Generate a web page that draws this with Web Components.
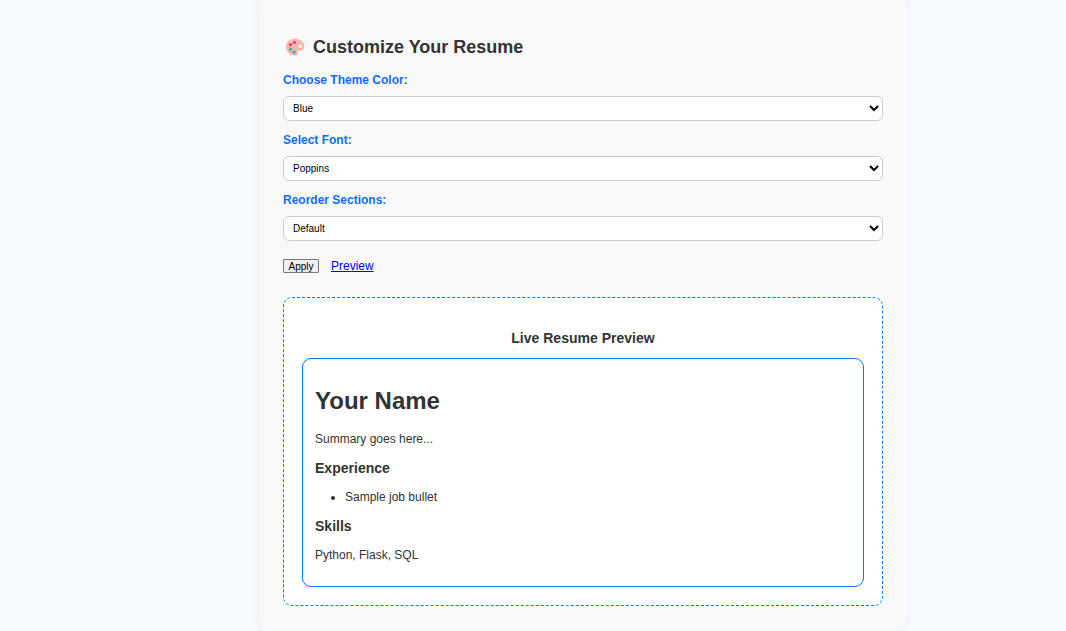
<!DOCTYPE html>
<html lang="en">
<head>
<meta charset="utf-8">
<title>Customize Your Resume</title>
<style>
html,body{margin:0;height:100%;overflow:hidden}
body{background:#f7fbff;color:#333;font:12px/14px "Liberation Sans",Arial,sans-serif}
</style>
</head>
<body>
<resume-card>
  <palette-heading>Customize Your Resume</palette-heading>
  <select-field label="Choose Theme Color:" value="Blue"></select-field>
  <select-field label="Select Font:" value="Poppins"></select-field>
  <select-field label="Reorder Sections:" value="Default"></select-field>
  <form-actions></form-actions>
  <live-preview><resume-sheet></resume-sheet></live-preview>
</resume-card>
<script>
function define(name, html) {
  customElements.define(name, class extends HTMLElement {
    constructor() {
      super();
      this.attachShadow({mode: 'open'}).innerHTML = html;
    }
  });
}

define('resume-card', `<style>
:host{display:block;box-sizing:border-box;width:648px;height:630px;margin-left:259px;padding:36px 24px 0;background:#f9f9f9;border-radius:0 0 9px 9px;box-shadow:0 0 11px rgba(0,20,80,.045)}
</style><slot></slot>`);

define('palette-heading', `<style>
:host{display:block;margin-bottom:15px}
h2{display:flex;align-items:center;margin:0;padding-top:1px;font-size:18px;line-height:21px}
svg{width:20px;height:18px;margin:0 8px 1px 2px}
</style><h2><svg viewBox="0 0 20 18" aria-hidden="true">
<path d="M10 .8C5 .8 1 4.300 1 8.900c0 4.800 3.900 8.300 9 8.600 2 .1 2.900-.9 2.400-2.400-.5-1.500.4-2.600 2-2.500 3.100.2 5-1.200 5-3.900C19.400 3.800 15.200.8 10 .8z" fill="#ffb5a3"/>
<circle cx="15.200" cy="8.400" r="1.800" fill="#fff"/>
<circle cx="9.500" cy="4.500" r="1.700" fill="#b34be0"/>
<circle cx="5.500" cy="6.600" r="1.700" fill="#f03b78"/>
<circle cx="5.500" cy="11.200" r="1.700" fill="#37b3ad"/>
<circle cx="9.100" cy="14.100" r="1.700" fill="#5794ed"/>
</svg><slot></slot></h2>`);

customElements.define('select-field', class extends HTMLElement {
  constructor() {
    super();
    this.attachShadow({mode: 'open'}).innerHTML = `<style>
:host{display:block;margin-bottom:12px}
label{display:block;margin-bottom:9px;color:#0d6efd;font-weight:bold}
select{display:block;box-sizing:border-box;width:100%;height:25px;padding:0 5px;border:1px solid #ccc;border-radius:6px;background:#fff;color:#000;font:10px "Liberation Sans",Arial,sans-serif}
</style><label for="s"></label><select id="s"><option></option></select>`;
    this.shadowRoot.querySelector('label').textContent = this.getAttribute('label');
    this.shadowRoot.querySelector('option').textContent = this.getAttribute('value');
  }
});

define('form-actions', `<style>
:host{display:flex;align-items:center;gap:12px;margin:18px 0 24px;height:14px}
button{box-sizing:border-box;width:36px;height:14px;padding:0;border:1px solid #767676;border-radius:1px;background:#efefef;color:#000;font:10px/13px "Liberation Sans",Arial,sans-serif}
a{color:#00e}
</style><button type="button">Apply</button><a href="#">Preview</a>`);

define('live-preview', `<style>
:host{display:block;box-sizing:border-box;height:309px;padding:32px 18px 18px;border:1px dashed #007bff;border-radius:9px;background:#fff}
h3{margin:0 0 12px;font-size:14.04px;line-height:16px;text-align:center}
</style><h3>Live Resume Preview</h3><slot></slot>`);

define('resume-sheet', `<style>
:host{display:block;box-sizing:border-box;height:229px;padding:28px 12px 0;border:1px solid #007bff;border-radius:9px;background:#fff}
h1{margin:0 0 18px;font-size:24px;line-height:27px}
h3{margin:14px 0;font-size:14.04px;line-height:16px}
p{margin:0}
ul{margin:0;padding-left:30px}
</style><h1>Your Name</h1><p>Summary goes here...</p>
<h3>Experience</h3><ul><li>Sample job bullet</li></ul>
<h3>Skills</h3><p>Python, Flask, SQL</p>`);
</script>
</body>
</html>
